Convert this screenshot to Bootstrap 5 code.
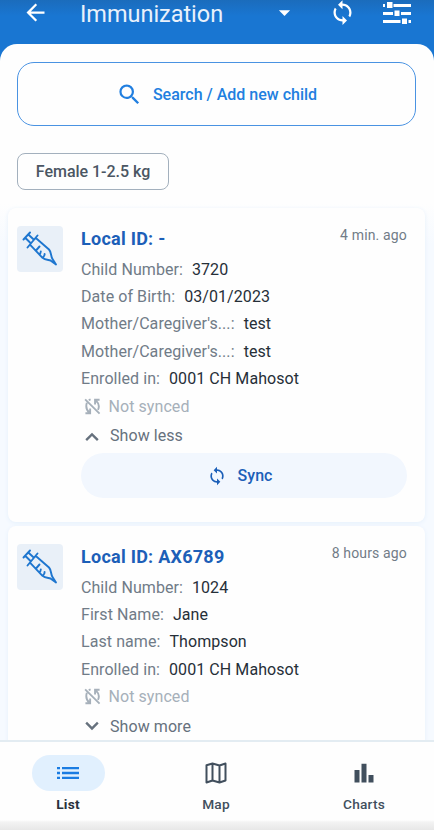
<!DOCTYPE html>
<html lang="en">
<head>
<meta charset="utf-8">
<meta name="viewport" content="width=device-width, initial-scale=1">
<title>Immunization</title>
<link href="https://cdn.jsdelivr.net/npm/bootstrap@5.3.0/dist/css/bootstrap.min.css" rel="stylesheet">
<style>
body{font-family:Roboto,"Liberation Sans",sans-serif;background:#1976d2;height:830px;overflow:hidden;letter-spacing:.07px}
svg{display:block;flex:none;fill:currentColor}
.app{height:830px}
.topbar{height:44px;padding:0 22px 19px 22px;background:linear-gradient(#1b6cbc,#1976d2 16px)}
.topbar h1{font-size:23.5px;line-height:24px;letter-spacing:-.03px;margin:2px 0 0 31px;width:187px;color:#e9f1fb}
.topbar .refresh{margin-right:28px}
.topbar .tune{margin-right:1px;margin-left:-1px}
.sheet{border-radius:17px 17px 0 0;background:#fefefe}
.search{height:64px;margin:18px 18px 0 17px;padding-top:1px;border:1.5px solid #4a93e2;border-radius:17px;color:#217fe0;font-size:16px;font-weight:500;letter-spacing:0}
.search svg{margin-right:10px}
.chip{width:152px;height:37px;margin:27px 0 0 17px;padding-top:1px;border:1.5px solid #a3b0bd;border-radius:8px;font-size:16px;font-weight:500;color:#4b5663;letter-spacing:-.03px}
.feed{margin-top:14px;padding:4px 9px 0 8px;background:linear-gradient(#fefefe,#f6faff 40px)}
.entry{border:0;border-radius:8px;background:#fefefe;box-shadow:0 1px 4px #e5f0fb;padding:18px 18px 0 9px;margin-bottom:4px;height:314px}
.entry .pic{width:46px;height:46px;border-radius:4px;background:#e9f0f8;color:#1e76cf;margin-right:18px}
.ttl{font-size:18px;font-weight:700;line-height:26px;color:#1c5fb8;letter-spacing:.25px}
.ago{font-size:14px;line-height:18px;color:#717c87;letter-spacing:.15px}
.info{font-size:16px;line-height:27.4px;color:#707b87;margin-top:3.5px}
.info b{font-weight:400;color:#262f38;margin-left:5px}
.unsynced{color:#a6b0ba;font-size:16px;line-height:27.5px;padding-left:3px}
.unsynced svg{margin-right:7.5px}
.toggle{color:#66717d;font-size:16px;line-height:28px;margin-top:2px;padding-left:1px}
.toggle svg{margin-top:-1px}
.syncbtn{height:45px;border-radius:23px;background:#f2f7fe;color:#1c5fb8;font-size:16px;font-weight:500;margin-top:3px;padding:1px 8px 0 0}
.syncbtn svg{margin:0 10px 0 0}
.tabs{height:90px;background:linear-gradient(#fefefe 78px,#f3f3f3 80px,#e6e6e6 89px);border-top:2px solid #e3ecf2;padding:13px 33.5px 0 31.5px;color:#414f5d}
.tab{width:73px;font-size:13.7px;font-weight:500;line-height:18px;letter-spacing:.2px}
.tab .pill{width:73px;height:36px;border-radius:18px;margin-bottom:4px}
.tab.on{color:#28323c;font-weight:700}
.tab.on .pill{background:#e1f0fe;color:#1a7ce2}
</style>
</head>
<body>
<svg width="0" height="0" class="d-none">
<symbol id="sync" viewBox="0 0 24 24"><path d="M12 4V1L8 5l4 4V6c3.31 0 6 2.69 6 6 0 1.01-.25 1.97-.7 2.8l1.46 1.46C19.54 15.03 20 13.57 20 12c0-4.42-3.58-8-8-8zm0 14c-3.31 0-6-2.69-6-6 0-1.01.25-1.97.7-2.8L5.24 7.74C4.46 8.97 4 10.43 4 12c0 4.42 3.58 8 8 8v3l4-4-4-4v3z"/></symbol>
<symbol id="nosync" viewBox="0 0 18 18"><g fill="none" stroke="currentColor" stroke-width="2"><path d="M1.200 1.500L16.500 16.500M3 5C1.600 9.500 3 13 5.500 15.300M14.800 12.500C16.400 9.300 15.500 5.500 12.800 2.800M11.700 7V1.800H16.500M6.500 11V16.200H1.500"/><path d="M5 2.300L7 1.500"/></g></symbol>
<symbol id="syringe" viewBox="0 0 46 46"><g fill="none" stroke="currentColor" stroke-width="1.900" stroke-linejoin="round" stroke-linecap="round"><path d="M6.500 13.500L13 6.500M8.200 11.800L13.500 17M11.300 8.500L16.700 13.500M10.500 21.500L20.500 9.500M13.200 18.800L25.500 31.800C28 34 31 33.800 33.500 34.500M18.800 12L32 23.500C34.500 26.300 33.500 29.500 35.500 33M33.500 34.500L39 38.500L35.500 33M19 24.500L22.500 20.500M22.500 28.200C23.500 27.500 23.700 26.500 23.800 25.500M26 31.300C27.200 30.500 27.700 29.500 27.600 28"/></g></symbol>
</svg>
<div class="app d-flex flex-column">
<header class="topbar d-flex align-items-center text-white">
<svg width="27" height="27" viewBox="0 0 24 24"><path d="M20 11H7.830l5.590-5.590L12 4l-8 8 8 8 1.410-1.410L7.830 13H20v-2z"/></svg>
<h1 class="fw-normal">Immunization</h1>
<svg width="27" height="27" viewBox="0 0 24 24" class="ms-1"><path d="M7 10l5 5 5-5z"/></svg>
<svg width="27" height="27" class="refresh ms-auto"><use href="#sync"/></svg>
<svg class="tune" width="28" height="24" viewBox="0 0 28 24"><path d="M0 3h2v3H0zM4 1h5.500v6H4zM10.500 3H28v3H10.500zM0 11h10v3H0zM11.500 9.500h5v5.500h-5zM18 11h10v3H18zM0 19h17.500v3H0zM19 17.500h5v5.500h-5zM25.500 19H28v3h-2.500z"/></svg>
</header>
<main class="sheet flex-grow-1 d-flex flex-column overflow-hidden">
<div class="search d-flex align-items-center justify-content-center flex-shrink-0">
<svg width="27" height="27" viewBox="0 0 24 24"><path d="M15.500 14h-.79l-.28-.27A6.471 6.471 0 0 0 16 9.500 6.500 6.500 0 1 0 9.500 16c1.610 0 3.090-.59 4.230-1.570l.27.28v.79l5 4.990L20.490 19l-4.990-5zm-6 0C7.010 14 5 11.990 5 9.500S7.010 5 9.500 5 14 7.010 14 9.500 11.990 14 9.500 14z"/></svg>
<span>Search / Add new child</span></div>
<div class="chip d-flex align-items-center justify-content-center flex-shrink-0">Female 1-2.5 kg</div>
<div class="feed flex-grow-1 overflow-hidden">
<article class="entry d-flex align-items-start">
<svg class="pic"><use href="#syringe"/></svg>
<div class="flex-grow-1">
<div class="d-flex justify-content-between"><div class="ttl">Local ID: -</div><div class="ago">4 min. ago</div></div>
<div class="info">
<div>Child Number: <b>3720</b></div><div>Date of Birth: <b>03/01/2023</b></div><div>Mother/Caregiver's...: <b>test</b></div><div>Mother/Caregiver's...: <b>test</b></div><div>Enrolled in: <b>0001 CH Mahosot</b></div></div>
<div class="unsynced d-flex align-items-center"><svg width="17" height="17"><use href="#nosync"/></svg>Not synced</div>
<div class="toggle d-flex align-items-center"><svg width="20" height="20" viewBox="0 0 24 24" class="me-2"><path d="M12 8l-8 8 2 2 6-6 6 6 2-2z"/></svg>Show less</div>
<div class="syncbtn d-flex align-items-center justify-content-center"><svg width="20" height="20"><use href="#sync"/></svg><span>Sync</span></div>
</div></article>
<article class="entry d-flex align-items-start">
<svg class="pic"><use href="#syringe"/></svg>
<div class="flex-grow-1">
<div class="d-flex justify-content-between"><div class="ttl">Local ID: AX6789</div><div class="ago">8 hours ago</div></div>
<div class="info">
<div>Child Number: <b>1024</b></div><div>First Name: <b>Jane</b></div><div>Last name: <b>Thompson</b></div><div>Enrolled in: <b>0001 CH Mahosot</b></div></div>
<div class="unsynced d-flex align-items-center"><svg width="17" height="17"><use href="#nosync"/></svg>Not synced</div>
<div class="toggle d-flex align-items-center"><svg width="20" height="20" viewBox="0 0 24 24" class="me-2"><path d="M12 17l-8-8 2-2 6 6 6-6 2 2z"/></svg>Show more</div>
</div></article>
</div>
</main>
<nav class="tabs d-flex justify-content-between flex-shrink-0 text-center">
<div class="tab on"><div class="pill d-flex align-items-center justify-content-center"><svg width="22" height="14" viewBox="0 0 22 14"><path d="M0 1h3v2.200H0zM5 1h17v2.200H5zM0 5.700h3v2.500H0zM5 5.700h17v2.500H5zM0 10.800h3V13H0zM5 10.800h17V13H5z"/></svg></div>List</div>
<div class="tab"><div class="pill d-flex align-items-center justify-content-center"><svg width="22" height="22" viewBox="0 0 22 22"><path fill="none" stroke="currentColor" stroke-width="2" stroke-linejoin="round" d="M1.500 3.200L7.500 1.500L14.500 3.500L20.500 1.500V18.500L14.500 20.500L7.500 18.500L1.500 20.500zM7.500 1.500V18.500M14.500 3.500V20.500"/></svg></div>Map</div>
<div class="tab"><div class="pill d-flex align-items-center justify-content-center"><svg width="20" height="20" viewBox="0 0 20 20"><path d="M.5 7h5v12.500h-5zM7.500.800h5v18.700h-5zM14.500 12h5v7.500h-5z"/></svg></div>Charts</div>
</nav>
</div>
<script src="https://cdn.jsdelivr.net/npm/bootstrap@5.3.0/dist/js/bootstrap.bundle.min.js"></script>
</body>
</html>
